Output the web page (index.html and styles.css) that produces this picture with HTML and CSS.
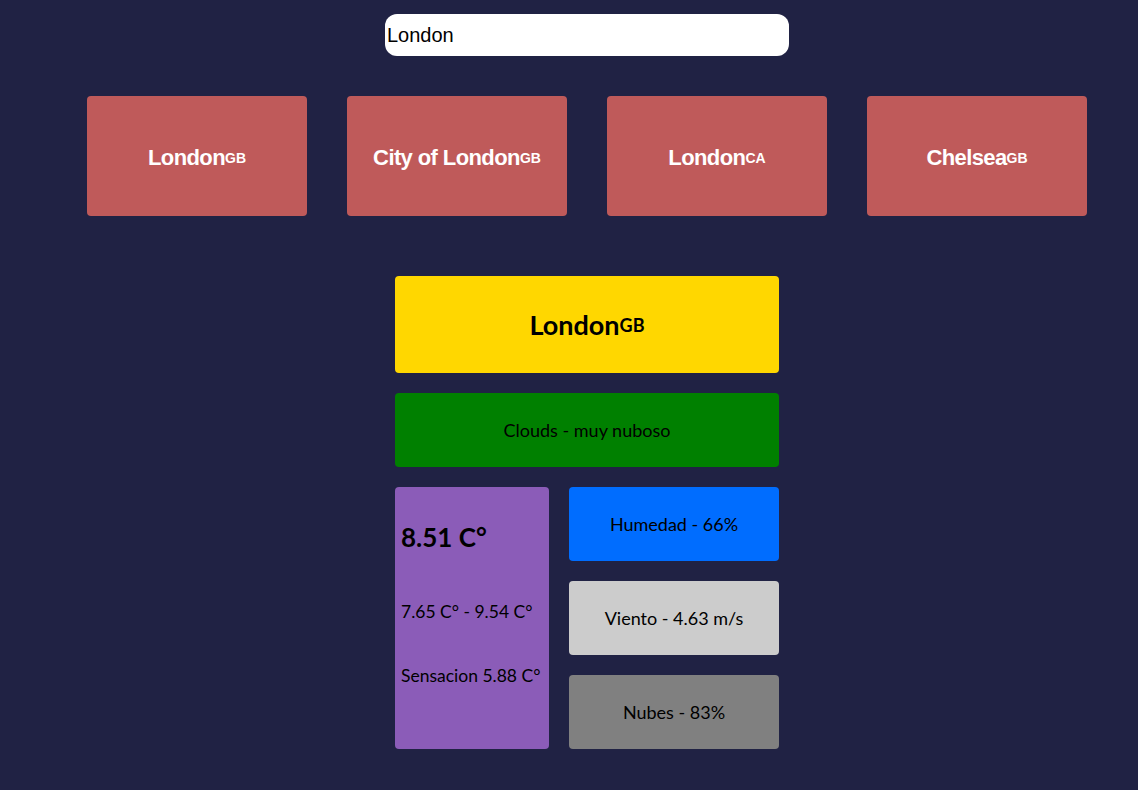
FILE: index.html
```html
<!DOCTYPE html>
<html lang="es">
<head>
<meta charset="utf-8">
<title>Clima</title>
<link rel="stylesheet" href="styles.css">
</head>
<body>
<div class="page">
  <div class="search-row">
    <input class="search" type="text" value="London">
  </div>
  <div class="results">
    <div class="result">London<sup>GB</sup></div>
    <div class="result">City of London<sup>GB</sup></div>
    <div class="result">London<sup>CA</sup></div>
    <div class="result">Chelsea<sup>GB</sup></div>
  </div>
  <div class="weather">
    <div class="city">London<sup>GB</sup></div>
    <div class="desc">Clouds - muy nuboso</div>
    <div class="details">
      <div class="temps">
        <div class="temp">8.51 C°</div>
        <div class="range">7.65 C° - 9.54 C°</div>
        <div class="feels">Sensacion 5.88 C°</div>
      </div>
      <div class="stats">
        <div class="stat humidity">Humedad - 66%</div>
        <div class="stat wind">Viento - 4.63 m/s</div>
        <div class="stat clouds">Nubes - 83%</div>
      </div>
    </div>
  </div>
</div>
</body>
</html>
```
FILE: styles.css
```css
html, body {
  margin: 0;
  padding: 0;
  background: #202244;
  height: 100%;
}
body {
  overflow: hidden;
}
.page {
  margin-left: 36px;
  width: 1102px;
  display: flex;
  flex-direction: column;
  align-items: center;
}
.search-row {
  padding-top: 14px;
}
.search {
  box-sizing: border-box;
  width: 404px;
  height: 42px;
  border: none;
  border-radius: 12px;
  background: #fff;
  padding: 1px 0 0 2px;
  font-family: "Liberation Sans", Arial, sans-serif;
  font-size: 20px;
  color: #000;
  outline: none;
}
.results {
  margin-top: 40px;
  display: flex;
  gap: 40px;
}
.result {
  box-sizing: border-box;
  width: 220px;
  height: 120px;
  padding-top: 4px;
  background: #bf5a5a;
  border-radius: 4px;
  display: flex;
  align-items: center;
  justify-content: center;
  color: #fff;
  font-family: "Liberation Sans", Arial, sans-serif;
  font-weight: bold;
  font-size: 22px;
  letter-spacing: -0.6px;
}
.result sup {
  font-size: 14px;
  vertical-align: 7px;
  letter-spacing: 0;
}
.weather {
  margin-top: 60px;
  width: 384px;
  display: flex;
  flex-direction: column;
  gap: 20px;
  font-family: Lato, "Open Sans", sans-serif;
  color: #000;
}
.city {
  height: 97px;
  background: #ffd700;
  border-radius: 4px;
  display: flex;
  align-items: center;
  justify-content: center;
  font-weight: bold;
  font-size: 27px;
}
.city sup {
  font-size: 18px;
  vertical-align: 9px;
}
.desc {
  height: 74px;
  background: #008000;
  border-radius: 4px;
  display: flex;
  align-items: center;
  justify-content: center;
  font-size: 18px;
}
.details {
  display: flex;
  gap: 20px;
}
.temps {
  width: 154px;
  height: 262px;
  box-sizing: border-box;
  background: #8b5cb8;
  border-radius: 4px;
  padding: 34px 0 0 6px;
  font-size: 17.5px;
  white-space: nowrap;
}
.temp {
  font-weight: bold;
  font-size: 26px;
  line-height: 32px;
}
.range {
  margin-top: 48px;
  line-height: 22px;
}
.feels {
  margin-top: 42px;
  line-height: 22px;
}
.stats {
  width: 210px;
  display: flex;
  flex-direction: column;
  gap: 20px;
}
.stat {
  height: 74px;
  border-radius: 4px;
  display: flex;
  align-items: center;
  justify-content: center;
  font-size: 18px;
}
.humidity { background: #006dff; }
.wind { background: #cccccc; }
.clouds { background: #808080; }
```
